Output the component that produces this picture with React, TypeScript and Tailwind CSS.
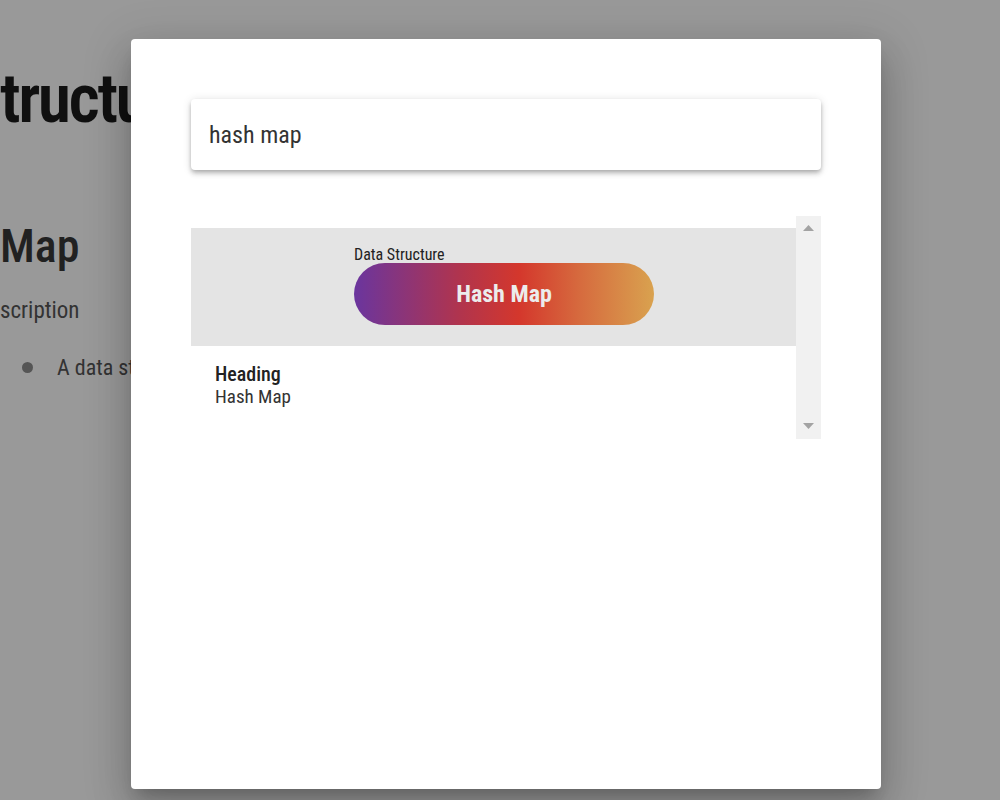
export default function App() {
  const font = { fontFamily: "'Roboto Condensed', Roboto, 'Liberation Sans Narrow', sans-serif" };

  return (
    <div className="relative h-[800px] w-[1000px] overflow-hidden bg-white [font-stretch:condensed]" style={font}>
      {/* page behind the dialog, only its left strip shows */}
      <div className="flex w-[131px] flex-col overflow-hidden whitespace-nowrap">
        <h1 className="mt-[65px] text-[68px] leading-none font-semibold tracking-[-2.5px] text-[#1c1c1c]">tructure</h1>
        <h2 className="mt-[90px] text-[46px] leading-none font-medium text-[#383838]">Map</h2>
        <p className="mt-[30px] text-[23px] leading-none font-normal text-[#555]">scription</p>
        <ul className="mt-[29px] flex items-center gap-[24px] pl-[22px] text-[22px] font-normal text-[#555]">
          <li className="h-[11px] w-[11px] shrink-0 rounded-full bg-[#8e8e8e]" />
          <li>A data structure</li>
        </ul>
      </div>

      {/* backdrop */}
      <div className="absolute inset-0 bg-black/40" />

      {/* dialog */}
      <div className="absolute left-[131px] top-[39px] flex h-[750px] w-[750px] flex-col rounded-[4px] bg-white p-[60px] shadow-[0_11px_15px_-7px_rgba(0,0,0,0.2),0_24px_38px_3px_rgba(0,0,0,0.14),0_9px_46px_8px_rgba(0,0,0,0.12)]">
        <div className="flex h-[71px] items-center rounded-[4px] bg-white px-[18px] shadow-[0_2px_4px_-1px_rgba(0,0,0,0.2),0_4px_5px_0_rgba(0,0,0,0.14),0_1px_10px_0_rgba(0,0,0,0.12)]">
          <span className="text-[24px] text-[#333]">hash map</span>
        </div>

        <div className="mt-[46px] flex h-[223px]">
          <div className="flex flex-1 flex-col pt-[12px]">
            <div className="flex h-[118px] flex-col bg-[#e4e4e4] pl-[163px] pt-[18px]">
              <span className="text-[16px] leading-[17px] font-normal text-[#222]">Data Structure</span>
              <div className="flex h-[62px] w-[300px] items-center justify-center rounded-full bg-[linear-gradient(90deg,#6a359e_0%,#b0344e_35%,#d4372c_55%,#d66a3e_75%,#d9a24f_100%)]">
                <span className="text-[24px] font-bold text-[#ececec]">Hash Map</span>
              </div>
            </div>
            <div className="flex flex-col pl-[24px] pt-[17px]">
              <span className="text-[20px] leading-[23px] font-medium text-[#222]">Heading</span>
              <span className="text-[19px] leading-[21px] font-normal text-[#333]">Hash Map</span>
            </div>
          </div>
          <div className="flex w-[25px] flex-col items-center justify-between bg-[#f1f1f1] pt-[9px] pb-[10px]">
            <svg width="11" height="6" viewBox="0 0 11 6"><path d="M5.5 0 11 6H0z" fill="#a3a3a3" /></svg>
            <svg width="11" height="6" viewBox="0 0 11 6"><path d="M0 0h11L5.5 6z" fill="#a3a3a3" /></svg>
          </div>
        </div>
      </div>
    </div>
  );
}
